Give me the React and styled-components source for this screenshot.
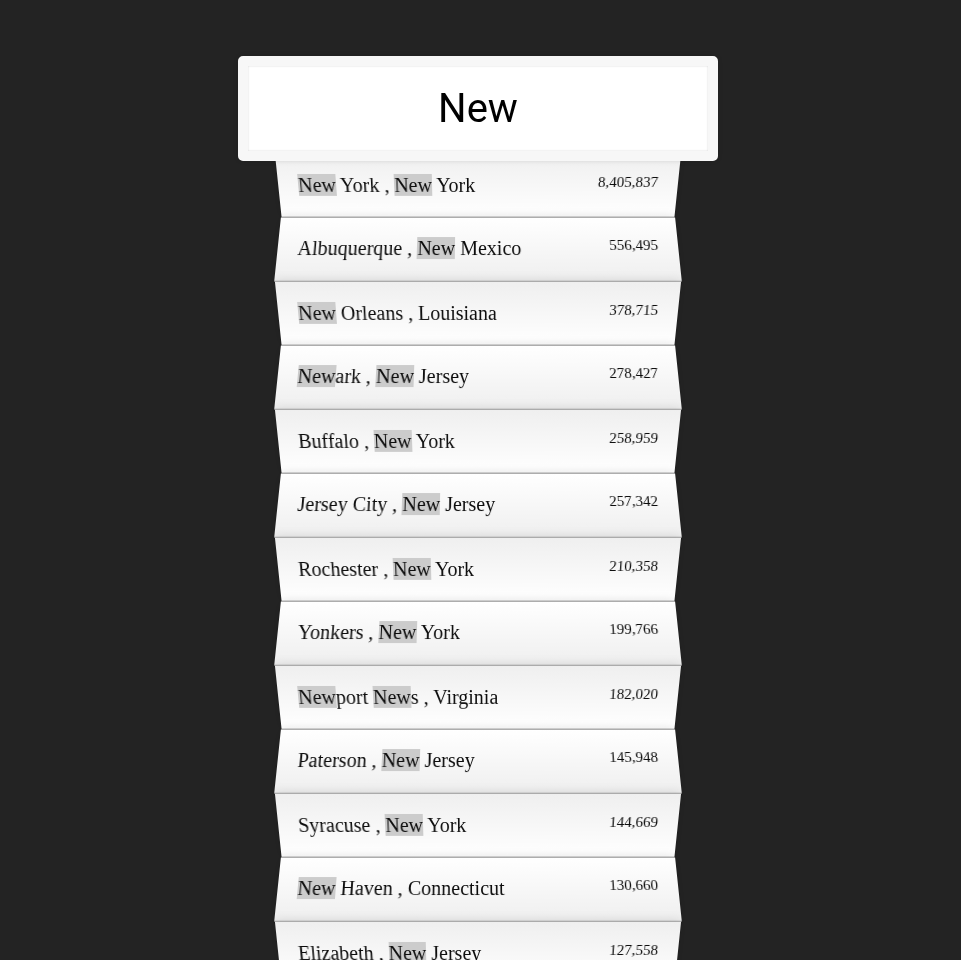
import React, { useState } from 'react';
import styled, { createGlobalStyle } from 'styled-components';

const GlobalStyle = createGlobalStyle`
  *, *::before, *::after {
    box-sizing: border-box;
  }

  html {
    background: #232323;
    font-family: 'Liberation Serif', 'Times New Roman', serif;
    font-size: 20px;
    font-weight: 200;
    overflow-x: hidden;
    scrollbar-width: none;
  }

  body {
    margin: 0;
    padding-right: 5px;
  }
`;

const SearchForm = styled.form`
  max-width: 400px;
  margin: 46px auto 50px;
`;

const SearchInput = styled.input`
  display: block;
  position: relative;
  top: 10px;
  z-index: 2;
  width: 120%;
  margin: 0 -10%;
  padding: 19px 20px;
  border: 10px solid #f7f7f7;
  border-radius: 5px;
  outline: 0;
  background: #fff;
  color: #000;
  font-family: Roboto, sans-serif;
  font-size: 40px;
  font-weight: 400;
  line-height: 47px;
  text-align: center;
  box-shadow: 0 0 5px rgba(0, 0, 0, 0.12), inset 0 0 2px rgba(0, 0, 0, 0.19);
`;

const Suggestions = styled.ul`
  margin: 0;
  padding: 0;
`;

const Suggestion = styled.li`
  display: flex;
  justify-content: space-between;
  padding: 20px;
  border-bottom: 1px solid #c4c4c4;
  list-style: none;
  line-height: 23px;
  color: #0c0c0c;
  box-shadow: 0 0 10px rgba(0, 0, 0, 0.14);

  &:nth-child(even) {
    transform: perspective(100px) rotateX(3deg) translateY(2px) scale(1.001);
    background: linear-gradient(to bottom, #fff 0%, #efefef 100%);
  }

  &:nth-child(odd) {
    transform: perspective(100px) rotateX(-3deg) translateY(3px);
    background: linear-gradient(to top, #fff 0%, #efefef 100%);
  }
`;

const Highlight = styled.span`
  background: #ccc;
`;

const Population = styled.span`
  font-size: 15px;
  line-height: 17px;
`;

const places = [
  ['New York', 'New York', 8405837],
  ['Albuquerque', 'New Mexico', 556495],
  ['New Orleans', 'Louisiana', 378715],
  ['Newark', 'New Jersey', 278427],
  ['Buffalo', 'New York', 258959],
  ['Jersey City', 'New Jersey', 257342],
  ['Rochester', 'New York', 210358],
  ['Yonkers', 'New York', 199766],
  ['Newport News', 'Virginia', 182020],
  ['Paterson', 'New Jersey', 145948],
  ['Syracuse', 'New York', 144669],
  ['New Haven', 'Connecticut', 130660],
  ['Elizabeth', 'New Jersey', 127558],
];

function Marked({ text, query }) {
  if (!query) return text;
  const safe = query.replace(/[.*+?^${}()|[\]\\]/g, '\\$&');
  return text
    .split(new RegExp(`(${safe})`, 'gi'))
    .map((part, i) => (i % 2 ? <Highlight key={i}>{part}</Highlight> : part));
}

export default function App() {
  const [query, setQuery] = useState('New');
  const needle = query.toLowerCase();
  const matches = places.filter(
    ([city, state]) =>
      city.toLowerCase().includes(needle) || state.toLowerCase().includes(needle)
  );

  return (
    <>
      <GlobalStyle />
      <SearchForm onSubmit={(e) => e.preventDefault()}>
        <SearchInput
          type="text"
          aria-label="City or State"
          placeholder="City or State"
          value={query}
          onChange={(e) => setQuery(e.target.value)}
        />
        <Suggestions>
          {matches.map(([city, state, population]) => (
            <Suggestion key={city}>
              <span>
                <Marked text={city} query={query} />
                {' , '}
                <Marked text={state} query={query} />
              </span>
              <Population>{population.toLocaleString('en-US')}</Population>
            </Suggestion>
          ))}
        </Suggestions>
      </SearchForm>
    </>
  );
}
